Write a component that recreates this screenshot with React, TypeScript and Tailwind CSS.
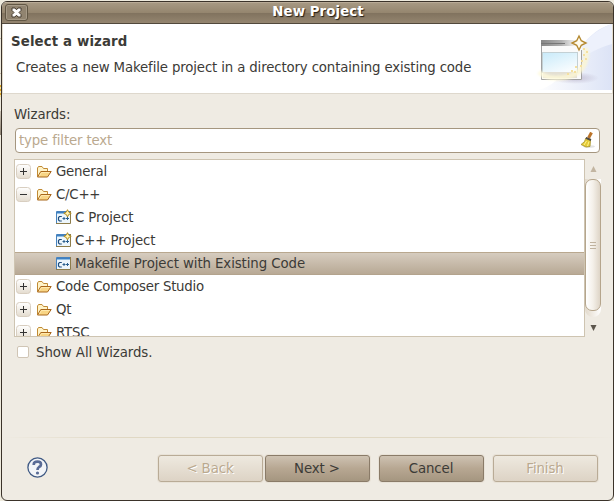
import React from "react";

function Folder() {
  return (
    <svg width="16" height="16" viewBox="0 0 16 16" className="shrink-0">
      <path d="M1.5 12.5V4L2.5 2.5H6L7.5 4.5H11.5V7" fill="#fff3c8" stroke="#c08a34" />
      <path d="M1.5 13L4.8 7.5H15.2L11.5 13Z" fill="#f8d585" stroke="#a8661a" strokeLinejoin="round" />
      <path d="M3.2 12.2L5.5 8.5H13.5" fill="none" stroke="#ffe9ae" />
    </svg>
  );
}

function CppIcon({ star }: { star?: boolean }) {
  return (
    <svg width="16" height="16" viewBox="0 0 16 16" className="mb-[2px] shrink-0">
      <rect x="0.5" y="2.5" width="14" height="12" fill="#edf6fc" />
      <path d="M14.5 2V14.5H0" fill="none" stroke="#8d7c4a" />
      <path d="M0.5 14V2.5H14" fill="none" stroke="#4682bd" />
      <path d="M1 3.5H14" stroke="#3f7fc2" />
      <path d="M1 4.5H14" stroke="#8fbfe6" />
      <path d="M5.8 7.5H3.5L2.5 8.5V11L3.5 12H5.8" fill="none" stroke="#1f4d7c" strokeWidth="1.2" />
      <path d="M6.5 9.5H9.5M8 8V11M10 9.5H13M11.5 8V11" fill="none" stroke="#2c608f" />
      {star && (
        <path d="M11.5 0.7L12.7 3.1L15.2 4.3L12.7 5.5L11.5 7.9L10.3 5.5L7.8 4.3L10.3 3.1Z" fill="#fff3b4" stroke="#b08c20" />
      )}
    </svg>
  );
}

function Expander({ open }: { open?: boolean }) {
  return (
    <svg width="16" height="16" viewBox="0 0 16 16" className="mb-[2px] shrink-0">
      <defs>
        <linearGradient id="exp" x1="0" y1="0" x2="0" y2="1">
          <stop stopColor="#fff" />
          <stop offset="1" stopColor="#e4dccf" />
        </linearGradient>
      </defs>
      <rect x="1.5" y="1.5" width="14" height="14" rx="3" fill="url(#exp)" stroke="#d8cec0" />
      <path d={open ? "M5 8.5H12" : "M5 8.5H12M8.5 5V12"} stroke="#333" />
    </svg>
  );
}

function Group({ label, open }: { label: string; open?: boolean }) {
  return (
    <div className="flex h-[23px] shrink-0 items-center">
      <Expander open={open} />
      <span className="w-[5px]" />
      <Folder />
      <span className="pl-1 tracking-[-0.24px]">{label}</span>
    </div>
  );
}

function Item({ label, star, selected }: { label: string; star?: boolean; selected?: boolean }) {
  return (
    <div
      className={
        "flex h-[23px] shrink-0 items-center pl-[41px] " +
        (selected ? "border-y border-t-[#b9a88f] border-b-[#b3a38d] bg-linear-to-b from-[#d6ccbf] to-[#b8a995]" : "")
      }
    >
      <CppIcon star={star} />
      <span className="pl-[3px] tracking-[-0.09px]">{label}</span>
    </div>
  );
}

function Button({ label, disabled }: { label: string; disabled?: boolean }) {
  return (
    <button
      className={
        "h-[27px] w-[105px] rounded-[3px] border pr-px pb-px text-center tracking-[-0.1px] shadow-[0_0_0_1px_#e8e2d7] " +
        (disabled
          ? "border-[#b9ab96] bg-linear-to-b from-[#eee9df] to-[#ddd3c5] text-[#baa98f] [text-shadow:1px_1px_#fff]"
          : "border-[#8a7b68] bg-linear-to-b from-[#cec2b2] via-[#b7a792] to-[#a59680]")
      }
    >
      {label}
    </button>
  );
}

function WizardBanner() {
  return (
    <svg width="76" height="66" viewBox="0 0 76 66">
      <defs>
        <linearGradient id="wash" x1="0" y1="0" x2="1" y2="0">
          <stop stopColor="#fff" />
          <stop offset="1" stopColor="#dce3f6" />
        </linearGradient>
        <linearGradient id="bar" x1="0" y1="0" x2="1" y2="0">
          <stop stopColor="#868686" />
          <stop offset="0.6" stopColor="#b0b0b0" />
          <stop offset="1" stopColor="#f2f2f2" />
        </linearGradient>
        <linearGradient id="pane" x1="0" y1="0" x2="0.6" y2="1">
          <stop stopColor="#c8eafa" />
          <stop offset="1" stopColor="#f8fcfe" />
        </linearGradient>
        <linearGradient id="trail" x1="0" y1="0" x2="1" y2="0">
          <stop stopColor="#fffbdc" />
          <stop offset="1" stopColor="#fdf6cf" />
        </linearGradient>
        <radialGradient id="shade">
          <stop stopColor="#a99fbb" stopOpacity="0.6" />
          <stop offset="1" stopColor="#a99fbb" stopOpacity="0" />
        </radialGradient>
        <filter id="glow" x="-20%" y="-20%" width="140%" height="140%">
          <feGaussianBlur stdDeviation="1" />
        </filter>
      </defs>
      <path d="M0 66C35 62 35 12 76 0V66Z" fill="url(#wash)" />
      <path d="M37 35C48 15 62 5 76 0V20C60 24 50 33 37 35Z" fill="#edf1fc" />
      <g transform="translate(-1 0)">
        <ellipse cx="40" cy="54" rx="24" ry="6" fill="url(#shade)" />
        <rect x="6" y="16" width="41" height="40" fill="#fafafa" />
        <path d="M6.5 16V55.5H46.5V26" fill="none" stroke="#a0a0a0" />
        <rect x="6" y="16" width="34" height="6" fill="url(#bar)" />
        <path d="M6 19.5H30" stroke="#777" />
        <rect x="7.5" y="28.5" width="35" height="20" fill="url(#pane)" stroke="#c3d0d4" />
        <rect x="8" y="48" width="34" height="6" fill="#e3dfd3" />
        <path d="M4 48Q10 54 21 54Q42 54 49 41Q53 31 50 24" fill="none" stroke="url(#trail)" strokeWidth="5" opacity="0.8" filter="url(#glow)" />
        <path d="M32 50H34M36 47H38M39 48H41M40 43H42M45 42H47M46 37H48M50 35H52M48 31H50M51 28H53M48 25H50" stroke="#f5e09f" strokeWidth="2" />
        <path d="M44 12L46.3 16.7L51 19L46.3 21.3L44 26L41.7 21.3L37 19L41.7 16.7Z" fill="#fffbed" stroke="#b58a32" strokeWidth="1.4" />
      </g>
    </svg>
  );
}

export default function App() {
  return (
    <div className="relative h-[501px] w-[614px] overflow-hidden bg-[#eeeadd] pl-px pt-px font-['DejaVu_Sans',sans-serif] text-[13.333px] leading-[17px] text-[#3c3b37]">
      <div className="absolute top-[38px] left-0 h-px w-px bg-[#c9bda9]" />
      <div className="absolute top-[73px] left-0 h-px w-px bg-[#c9bda9]" />
      <div className="absolute top-[85px] left-0 h-3 w-px bg-[repeating-linear-gradient(#dfa929_0_2px,#f3dfa0_2px_4px)]" />
      <div className="absolute top-[111px] left-0 h-[24px] w-px bg-linear-to-b from-[#cfc6b8] to-[#8f8575]" />
      <main className="flex h-[500px] w-[613px] flex-col overflow-hidden rounded-[6px] border border-[#3b332a] bg-[#efebe3]">
        <header className="flex h-[22px] shrink-0 items-center border-t border-b border-t-[#b9ab97] border-b-[#51483b] bg-[linear-gradient(#a69882,#95866f_48%,#81735f_52%,#94856f)]">
          <button className="mb-px ml-[3px] flex h-[17px] w-[23px] shrink-0 items-center justify-center rounded-[3px] border border-[#625744] bg-[#918470] shadow-[inset_0_0_0_1px_#a79b88]">
            <svg width="11" height="11" viewBox="0 0 11 11" className="shrink-0">
              <path d="M1 1H4L5.5 2.8L7 1H10V3.5L8 5.5L10 7.5V10H7L5.5 8.2L4 10H1V7.5L3 5.5L1 3.5Z" fill="#fff" stroke="#473d30" />
            </svg>
          </button>
          <h1 className="w-[568px] pb-[4px] pl-3 text-center font-bold tracking-[0.08px] text-white [text-shadow:1px_1px_1px_#211c15]">New Project</h1>
        </header>
        <section className="flex h-[70px] shrink-0 justify-between border-x border-b border-x-[#e5decf] border-b-[#ded8cd] bg-white">
          <div className="pt-[9px] pl-2">
            <h2 className="font-bold tracking-[0.13px]">Select a wizard</h2>
            <p className="pt-[9px] pl-[5px] tracking-[-0.147px] whitespace-nowrap">Creates a new Makefile project in a directory containing existing code</p>
          </div>
          <WizardBanner />
        </section>
        <section className="pt-3 pr-[12px] pl-3">
          <label className="block h-[22px] tracking-[-0.06px]">Wizards:</label>
          <div className="mr-px ml-px flex h-[25px] items-center justify-between rounded-[4px] border border-[#a5967f] bg-white pr-[3px] pl-[3px] text-[#baa98f]">
            <span className="tracking-[-0.15px]">type filter text</span>
            <svg width="16" height="16" viewBox="0 0 16 16" className="mb-px">
              <ellipse cx="9" cy="14.5" rx="6" ry="1.3" fill="#e4e4e4" />
              <path d="M8.5 6L11.5 0.5" stroke="#bb742a" strokeWidth="3" />
              <path d="M6 6L10.5 8L10 14.5L6 15L1 12.5Q5 10.5 6 6Z" fill="#e4ca35" stroke="#a39128" strokeWidth="0.8" />
              <path d="M5.8 5.8L11 8" stroke="#504b42" strokeWidth="2" />
              <path d="M6.5 9L4 13M9 9.5L7.5 14" stroke="#fff38b" />
            </svg>
          </div>
          <div className="mt-[6px] flex h-[178px]">
            <div className="flex w-[571px] flex-col overflow-hidden border border-[#cec4b1] bg-white">
              <Group label="General" />
              <Group label="C/C++" open />
              <Item label="C Project" star />
              <Item label="C++ Project" star />
              <Item label="Makefile Project with Existing Code" selected />
              <Group label="Code Composer Studio" />
              <Group label="Qt" />
              <Group label="RTSC" />
            </div>
            <div className="flex w-4 flex-col items-center">
              <svg width="7" height="20" viewBox="0 0 7 20"><path d="M3.5 7L6.5 13H0.5Z" fill="#c2b5a1" /></svg>
              <div className="h-[138px] w-4 rounded-b-lg bg-linear-to-r from-[#e2d9cb] to-[#fff]">
                <div className="flex h-[132px] w-4 flex-col items-center justify-center gap-[2px] rounded-[7px] border border-[#b5a58c] bg-linear-to-r from-white via-[#f4f0e9] to-[#ded5c7]">
                  <i className="h-px w-[6px] bg-[#c0b39f]" />
                  <i className="h-px w-[6px] bg-[#c0b39f]" />
                  <i className="h-px w-[6px] bg-[#c0b39f]" />
                </div>
              </div>
              <svg width="7" height="20" viewBox="0 0 7 20"><path d="M0.5 8H6.5L3.5 14Z" fill="#5c564d" /></svg>
            </div>
          </div>
          <label className="flex h-[30px] items-center tracking-[-0.07px]">
            <span className="mr-[7px] ml-[3px] h-3 w-3 rounded-[2px] border border-[#d0c5b5] bg-white" />
            Show All Wizards.
          </label>
        </section>
        <div className="mt-auto h-px shrink-0 bg-[linear-gradient(to_right,#efebe3,#e0d8c4_20%,#e0d8c4_80%,#efebe3)]" />
        <footer className="flex h-[62px] shrink-0 items-start pt-[17px] pl-[25px]">
          <svg className="mt-[2px]" width="21" height="21" viewBox="0 0 21 21">
            <circle cx="10.5" cy="10.5" r="9.6" fill="#f3f5f8" stroke="#405a84" strokeWidth="1.3" />
            <path d="M6.8 8V7Q7 4.7 10.5 4.7Q14 4.7 14 7.5Q14 9 12 10Q10.5 11 10.5 13" fill="none" stroke="#5a6c96" strokeWidth="2.7" />
            <circle cx="10.5" cy="16" r="1.6" fill="#5a6c96" />
          </svg>
          <div className="ml-[110px] flex">
            <Button label="&lt; Back" disabled />
            <div className="ml-[2px]"><Button label="Next &gt;" /></div>
            <div className="ml-[9px]"><Button label="Cancel" /></div>
            <div className="ml-[9px]"><Button label="Finish" disabled /></div>
          </div>
        </footer>
      </main>
    </div>
  );
}
